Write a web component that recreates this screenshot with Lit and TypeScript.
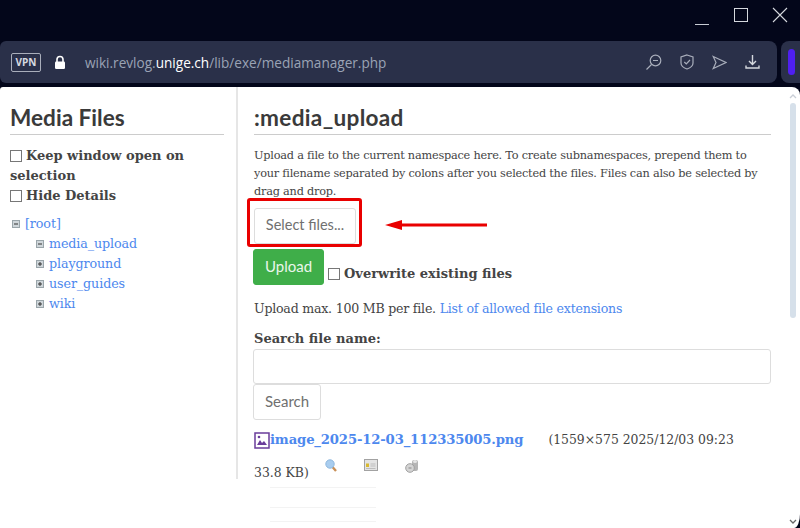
import { LitElement, html, css } from "lit";
import { customElement } from "lit/decorators.js";

@customElement("app-root")
export class AppRoot extends LitElement {
  static styles = css`
    :host { display: block; width: 800px; height: 528px; overflow: hidden; background: #03061a; font-family: "DejaVu Serif", serif; color: #444; }
    a { color: #4d88ee; text-decoration: none; }
    .titlebar { height: 41px; display: flex; justify-content: flex-end; }
    .win-row { display: flex; }
    .winbtn { width: 39px; height: 30px; display: flex; align-items: center; justify-content: center; }
    .winbtn.close { width: 40px; }
    .toolbar { height: 42px; display: flex; gap: 4px; }
    .urlbar { width: 777px; background: #2a3049; border-radius: 6px 8px 8px 6px; display: flex; align-items: center; padding: 0 8px 0 11px; box-sizing: border-box; font: 13.6px "Open Sans", sans-serif; color: #9aa3b5; }
    .vpn { width: 30px; height: 19px; border: 1px solid #a9aebb; border-radius: 2px; box-sizing: border-box; color: #d6d9e0; font: bold 10px "Open Sans", sans-serif; display: flex; align-items: center; justify-content: center; }
    .lock { margin: 0 19px 0 13px; display: flex; }
    .url b { font-weight: 400; color: #fff; }
    .tools { margin-left: auto; display: flex; align-items: center; }
    .tools span { width: 33px; display: flex; justify-content: center; }
    .tools svg { display: block; }
    .side { width: 19px; background: #2a3049; border-radius: 8px 0 0 8px; display: flex; align-items: center; justify-content: center; }
    .side i { width: 7px; height: 26px; border-radius: 4px; background: #4f1ff0; margin-left: 2px; }
    .page { margin-top: 4px; height: 441px; background: #fff; border-radius: 3px 8px 6px 0 / 3px 8px 14px 0; display: flex; position: relative; }
    .left { flex: none; width: 238px; height: 392px; border-right: 2px solid #e6e6e6; box-sizing: border-box; padding: 16px 12px 0 10px; }
    .right { flex: 1; padding: 16px 29px 0 16px; min-width: 0; }
    h1 { margin: 0; font: 700 22.6px/29px "Lato", "Open Sans", sans-serif; color: #3a3a3a; border-bottom: 1px solid #ccc; padding-bottom: 2px; }
    .right h1 { letter-spacing: 0.3px; }
    .cb { display: inline-block; width: 10px; height: 10px; border: 1px solid #777; background: #fff; vertical-align: -2px; margin-right: 4px; }
    .opts { margin-top: 11px; font: 700 13px/20px "DejaVu Serif", serif; letter-spacing: -0.02px; }
    .tree { margin: 8px 0 0 2px; font-size: 12.7px; line-height: 20px; letter-spacing: -0.1px; }
    .node { display: flex; align-items: center; gap: 5px; }
    .node.sub { margin-left: 24px; }
    .pm { width: 8px; height: 8px; flex: none; display: block; }
    p { margin: 0; }
    .intro { margin-top: 12px; font-size: 11.3px; line-height: 18px; letter-spacing: -0.22px; }
    .btn { display: flex; align-items: center; justify-content: center; box-sizing: border-box; border: 1px solid #ddd; border-radius: 3px; background: #fff; color: #707070; font: 14.5px "Lato", sans-serif; padding: 0 0 3px; }
    .select { margin-top: 7px; width: 102px; height: 36px; }
    .up-row { margin: 5px 0 0 -1px; display: flex; align-items: flex-end; gap: 4px; }
    .upload { width: 71px; height: 36px; background: #3fae49; border-color: #3fae49; color: #eaf6eb; font-size: 15px; }
    .over { font: 700 13px/20px "DejaVu Serif", serif; padding-bottom: 1px; }
    .max { margin-top: 14px; font-size: 12.6px; line-height: 20px; letter-spacing: -0.23px; }
    .search-l { margin-top: 10px; font: 700 13px/20px "DejaVu Serif", serif; }
    .field { margin: 0 0 0 -1px; height: 35px; border: 1px solid #ddd; border-radius: 3px; box-sizing: border-box; }
    .search { margin-left: -1px; width: 68px; height: 36px; font-size: 15px; }
    .file { margin-top: 10px; display: flex; align-items: center; font-size: 12.4px; line-height: 20px; }
    .file svg { flex: none; }
    .file a { font-weight: 700; font-size: 13.2px; margin-right: 25px; letter-spacing: -0.15px; }
    .meta { display: flex; align-items: flex-start; font-size: 12.4px; line-height: 20px; margin-top: 9px; }
    .meta span { padding-top: 4px; margin-right: 16px; }
    .meta svg { display: block; margin-right: 27px; flex: none; }
    .rule { margin-left: 16px; width: 106px; border-top: 1px solid #f3f3f3; }
    .r1 { margin-top: 4px; } .r2 { margin-top: 19px; } .r3 { margin-top: 13px; }
    .scroll { position: absolute; top: 0; right: 0; width: 14px; height: 100%; }
    .scroll .arrow { position: absolute; left: 3px; top: 7px; }
    .scroll .arrow.down { top: auto; left: 3px; bottom: 4px; }
    .scroll .thumb { position: absolute; left: 4px; top: 16px; width: 6px; height: 215px; background: #d6e0ea; border-radius: 3px; }
    .callout { position: absolute; left: 247px; top: 111px; width: 115px; height: 49px; border: 3px solid #e90000; border-radius: 3px; box-sizing: border-box; }
    .pointer { position: absolute; left: 385px; top: 132px; display: block; }
  `;

  private pm(plus: boolean) {
    return html`<svg class="pm" viewBox="0 0 8 8"><rect x=".5" y=".5" width="7" height="7" fill="#cfd6da" stroke="#9aa5aa"/><path d="${plus ? "M2 4h4M4 2v4" : "M2 4h4"}" stroke="#333"/></svg>`;
  }

  render() {
    const ic = "#a9aebb";
    return html`
      <div class="titlebar"><div class="win-row">
        <div class="winbtn"><svg width="16" height="24" viewBox="0 0 16 24"><path d="M1 21.5h14" stroke="#c8ccd4"/></svg></div>
        <div class="winbtn"><svg width="16" height="16" viewBox="0 0 16 16"><rect x="1.5" y="1.5" width="13" height="13" fill="none" stroke="#d5d8de"/></svg></div>
        <div class="winbtn close"><svg width="16" height="16" viewBox="0 0 16 16"><path d="M1 1l14 14M15 1L1 15" stroke="#d5d8de" stroke-width="1.1"/></svg></div>
      </div></div>
      <div class="toolbar">
        <div class="urlbar">
          <span class="vpn">VPN</span>
          <span class="lock"><svg width="12" height="15" viewBox="0 0 12 15"><path d="M3 7V4.5a3 3 0 0 1 6 0V7" fill="none" stroke="#fff" stroke-width="1.6"/><rect x="1" y="6.5" width="10" height="7.5" rx="1.2" fill="#fff"/></svg></span>
          <span class="url">wiki.revlog.<b>unige.ch</b>/lib/exe/mediamanager.php</span>
          <div class="tools">
            <span><svg width="17" height="17" viewBox="0 0 17 17" fill="none" stroke="${ic}" stroke-width="1.2"><circle cx="10.5" cy="6.5" r="5.3"/><path d="M6.5 10.5L1.5 15.5M8 6.5h5"/></svg></span>
            <span><svg width="14" height="16" viewBox="0 0 14 16" fill="none" stroke="${ic}" stroke-width="1.2"><path d="M7 1l6 2v6c0 3-3 5-6 6-3-1-6-3-6-6V3z"/><path d="M4.3 8l2 2L10 6"/></svg></span>
            <span><svg width="15" height="15" viewBox="0 0 15 15" fill="none" stroke="${ic}" stroke-width="1.2"><path d="M1.2 1.5l12.8 6-12.8 6 2.8-6z"/></svg></span>
            <span><svg width="15" height="16" viewBox="0 0 15 16" fill="none" stroke="#d5d8de" stroke-width="1.4"><path d="M7.5 1v9M4 7l3.5 3.5L11 7M1 11.5v2.5h13v-2.5"/></svg></span>
          </div>
        </div>
        <div class="side"><i></i></div>
      </div>
      <div class="page">
        <div class="left">
          <h1>Media Files</h1>
          <div class="opts">
            <div><span class="cb"></span>Keep window open on selection</div>
            <div><span class="cb"></span>Hide Details</div>
          </div>
          <div class="tree">
            <div class="node">${this.pm(false)}<a href="#">[root]</a></div>
            <div class="node sub">${this.pm(false)}<a href="#">media_upload</a></div>
            <div class="node sub">${this.pm(true)}<a href="#">playground</a></div>
            <div class="node sub">${this.pm(true)}<a href="#">user_guides</a></div>
            <div class="node sub">${this.pm(true)}<a href="#">wiki</a></div>
          </div>
        </div>
        <div class="right">
          <h1>:media_upload</h1>
          <p class="intro">Upload a file to the current namespace here. To create subnamespaces, prepend them to your filename separated by colons after you selected the files. Files can also be selected by drag and drop.</p>
          <button class="btn select">Select files...</button>
          <div class="up-row"><button class="btn upload">Upload</button><div class="over"><span class="cb"></span>Overwrite existing files</div></div>
          <p class="max">Upload max. 100 MB per file. <a href="#">List of allowed file extensions</a></p>
          <div class="search-l">Search file name:</div>
          <div class="field"></div>
          <button class="btn search">Search</button>
          <div class="file">
            <svg width="16" height="17" viewBox="0 0 16 17"><rect x="1" y="1" width="14" height="15" fill="#fff" stroke="#6a3d9a" stroke-width="1.5"/><path d="M3 13l3-5 2 3 2-2 3 4z" fill="#6a3d9a"/><circle cx="5" cy="5" r="1.3" fill="#6a3d9a"/></svg>
            <a href="#">image_2025-12-03_112335005.png</a><span>(1559×575 2025/12/03 09:23</span>
          </div>
          <div class="meta">
            <span>33.8 KB)</span>
            <svg width="12" height="13" viewBox="0 0 12 13"><path d="M7.5 8l3.5 4" stroke="#c99058" stroke-width="2.4"/><circle cx="5" cy="5" r="4.2" fill="#a9cdef" stroke="#8fb8de"/></svg>
            <svg width="14" height="13" viewBox="0 0 14 13"><rect x=".5" y=".5" width="13" height="11" fill="#e4e4e4" stroke="#a2a2a2"/><rect x="2" y="4.5" width="3" height="3.5" fill="#d8b930"/><path d="M6.5 5h5M6.5 7h5M2 9.5h9.500" stroke="#bdbdbd"/></svg>
            <svg width="14" height="14" viewBox="0 0 14 14"><rect x="7" y="1" width="6" height="11" rx="2" fill="#b5b5b5"/><ellipse cx="10" cy="2.500" rx="2" ry="1.500" fill="#e6e6e6"/><circle cx="5" cy="9" r="4.300" fill="#d4d4d4" stroke="#a0a0a0"/><path d="M3.500 9h3" stroke="#888"/></svg>
          </div>
          <div class="rule r1"></div>
          <div class="rule r2"></div>
          <div class="rule r3"></div>
        </div>
        <div class="scroll">
          <svg class="arrow" width="8" height="5" viewBox="0 0 8 5"><path d="M1 4l3-3 3 3" fill="none" stroke="#c9ced6" stroke-width="1.3"/></svg>
          <div class="thumb"></div>
          <svg class="arrow down" width="8" height="5" viewBox="0 0 8 5"><path d="M1 1l3 3 3-3" fill="none" stroke="#666" stroke-width="1.3"/></svg>
        </div>
        <div class="callout"></div>
        <svg class="pointer" width="103" height="12" viewBox="0 0 103 12"><path d="M0 6l17-5v3.500h85v3H17V11z" fill="#e90000"/></svg>
      </div>
    `;
  }
}
